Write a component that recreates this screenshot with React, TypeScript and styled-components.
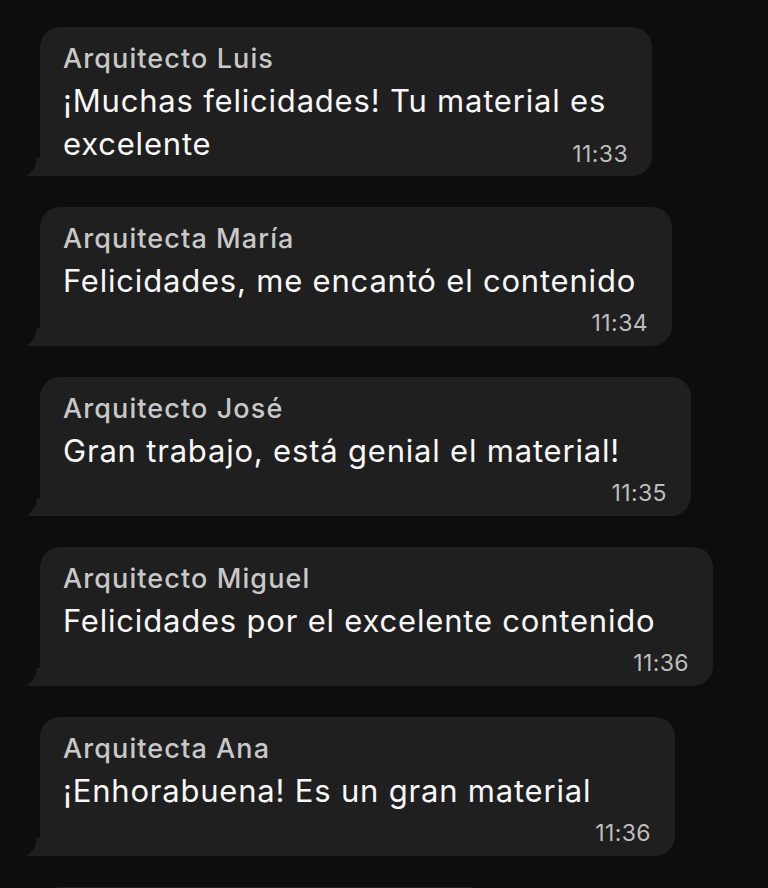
import styled, { createGlobalStyle } from "styled-components";

// `last` holds the words that share their line with the time stamp
const MESSAGES = [
  {
    author: "Arquitecto Luis",
    text: "¡Muchas felicidades! Tu material es",
    last: "excelente",
    time: "11:33",
    width: 612,
  },
  {
    author: "Arquitecta María",
    text: "Felicidades, me encantó el contenido",
    time: "11:34",
    width: 632,
  },
  {
    author: "Arquitecto José",
    text: "Gran trabajo, está genial el material!",
    time: "11:35",
    width: 651,
  },
  {
    author: "Arquitecto Miguel",
    text: "Felicidades por el excelente contenido",
    time: "11:36",
    width: 673,
  },
  {
    author: "Arquitecta Ana",
    text: "¡Enhorabuena! Es un gran material",
    time: "11:36",
    width: 635,
  },
];

const GlobalStyle = createGlobalStyle`
  html, body {
    margin: 0;
    padding: 0;
    background: #0d0d0d;
    overflow: hidden;
  }
  body {
    font-family: Inter, "Noto Sans", "Liberation Sans", sans-serif;
    -webkit-font-smoothing: antialiased;
  }
`;

const Tail = () => (
  <TailShape width="14" height="18" viewBox="0 0 14 18">
    <path d="M14 0 L14 18 L1.5 18 Q-0.5 18 1 16.6 Q9 11 10 0 Z" fill="#1f1f1f" />
  </TailShape>
);

const App = () => {
  return (
    <>
      <GlobalStyle />
      <Chat>
        {MESSAGES.map((msg, i) => (
          <Bubble key={i} $width={msg.width}>
            <Author>{msg.author}</Author>
            <Body>
              <Text>{msg.text}</Text>
              {msg.last ? (
                <LastLine>
                  <Text>{msg.last}</Text>
                  <Time>{msg.time}</Time>
                </LastLine>
              ) : (
                <Footer>
                  <Time>{msg.time}</Time>
                </Footer>
              )}
            </Body>
            <Tail />
          </Bubble>
        ))}
        {/* next message, only its top edge peeks in */}
        <Bubble $width={450} $peek />
      </Chat>
    </>
  );
};

export default App;

const Chat = styled.div`
  display: flex;
  flex-direction: column;
  align-items: flex-start;
  gap: 31px;
  padding: 27px 0 0 40px;
`;

const Bubble = styled.div<{ $width: number; $peek?: boolean }>`
  position: relative;
  box-sizing: border-box;
  width: ${({ $width }) => $width}px;
  min-height: ${({ $peek }) => ($peek ? "120px" : "0")};
  padding: 16px 24px 9px 23px;
  background: #1f1f1f;
  border-radius: 20px 20px 20px 0;
  display: flex;
  flex-direction: column;
`;

const TailShape = styled.svg`
  position: absolute;
  left: -13px;
  bottom: 0;
`;

const Author = styled.div`
  font-size: 27px;
  font-weight: 500;
  letter-spacing: 1.1px;
  line-height: 32px;
  color: #c8c8c8;
`;

const Body = styled.div`
  margin-top: 4px;
  display: flex;
  flex-direction: column;
`;

const Text = styled.div`
  font-size: 31px;
  letter-spacing: 0.8px;
  line-height: 43px;
  color: #f7f7f7;
`;

const Time = styled.div`
  font-size: 23px;
  letter-spacing: 0.4px;
  line-height: 28px;
  color: #bdbdbd;
`;

const LastLine = styled.div`
  display: flex;
  justify-content: space-between;
  align-items: flex-end;
  margin-bottom: 2px;

  ${Time} {
    margin-bottom: -3px;
  }
`;

const Footer = styled.div`
  display: flex;
  justify-content: flex-end;
  margin-top: 7px;
`;
